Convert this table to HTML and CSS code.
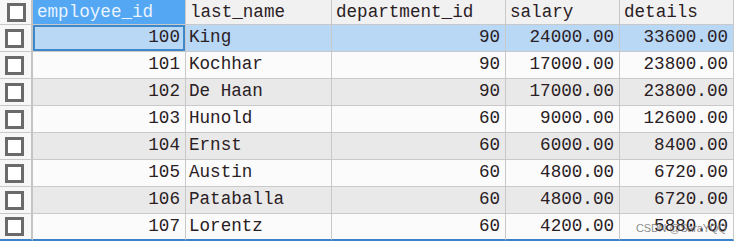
FILE: index.html
```html
<!DOCTYPE html>
<html>
<head>
<meta charset="utf-8">
<link rel="stylesheet" href="styles.css">
</head>
<body>
<div class="grid">
  <div class="row head">
    <div class="cell chk"><span class="box"></span></div>
    <div class="cell sorted">employee_id</div>
    <div class="cell">last_name</div>
    <div class="cell">department_id</div>
    <div class="cell">salary</div>
    <div class="cell">details</div>
  </div>
  <div class="row sel">
    <div class="cell chk"><span class="box"></span></div>
    <div class="cell num focus">100</div>
    <div class="cell">King</div>
    <div class="cell num">90</div>
    <div class="cell num">24000.00</div>
    <div class="cell num">33600.00</div>
  </div>
  <div class="row">
    <div class="cell chk"><span class="box"></span></div>
    <div class="cell num">101</div>
    <div class="cell">Kochhar</div>
    <div class="cell num">90</div>
    <div class="cell num">17000.00</div>
    <div class="cell num">23800.00</div>
  </div>
  <div class="row alt">
    <div class="cell chk"><span class="box"></span></div>
    <div class="cell num">102</div>
    <div class="cell">De Haan</div>
    <div class="cell num">90</div>
    <div class="cell num">17000.00</div>
    <div class="cell num">23800.00</div>
  </div>
  <div class="row">
    <div class="cell chk"><span class="box"></span></div>
    <div class="cell num">103</div>
    <div class="cell">Hunold</div>
    <div class="cell num">60</div>
    <div class="cell num">9000.00</div>
    <div class="cell num">12600.00</div>
  </div>
  <div class="row alt">
    <div class="cell chk"><span class="box"></span></div>
    <div class="cell num">104</div>
    <div class="cell">Ernst</div>
    <div class="cell num">60</div>
    <div class="cell num">6000.00</div>
    <div class="cell num">8400.00</div>
  </div>
  <div class="row">
    <div class="cell chk"><span class="box"></span></div>
    <div class="cell num">105</div>
    <div class="cell">Austin</div>
    <div class="cell num">60</div>
    <div class="cell num">4800.00</div>
    <div class="cell num">6720.00</div>
  </div>
  <div class="row alt">
    <div class="cell chk"><span class="box"></span></div>
    <div class="cell num">106</div>
    <div class="cell">Pataballa</div>
    <div class="cell num">60</div>
    <div class="cell num">4800.00</div>
    <div class="cell num">6720.00</div>
  </div>
  <div class="row last">
    <div class="cell chk"><span class="box"></span></div>
    <div class="cell num">107</div>
    <div class="cell">Lorentz</div>
    <div class="cell num">60</div>
    <div class="cell num">4200.00</div>
    <div class="cell num">5880.00</div>
  </div>
  <div class="watermark">CSDN @SaraYQQ</div>
</div>
</body>
</html>
```
FILE: styles.css
```css
html, body {
  margin: 0;
  padding: 0;
  background: #ffffff;
}
.grid {
  position: relative;
  width: 734px;
  height: 242px;
  overflow: hidden;
  font-family: "Liberation Mono", "DejaVu Sans Mono", monospace;
  font-size: 17.6px;
  color: #2a2024;
}
.row {
  display: grid;
  grid-template-columns: 33px 153px 146px 174px 114px 114px;
  height: 27px;
  background: #fbfbfb;
}
.row.alt { background: #e9e9e9; }
.row.sel { background: #b9d8f6; }
.row.head { height: 25px; background: #f1f1f1; }
.cell {
  box-sizing: border-box;
  border-right: 1px solid #c9c9c9;
  border-bottom: 1px solid #c9c9c9;
  padding: 0 4px 0 3px;
  display: flex;
  align-items: center;
  white-space: nowrap;
  overflow: hidden;
  line-height: 1;
}
.row.head .cell { padding-top: 1px; padding-left: 4px; }
.row.last .cell { border-bottom: 2px solid #3b82c9; }
.cell.num { justify-content: flex-end; padding-right: 5px; }
.cell.chk {
  justify-content: center;
  padding: 0;
  background: #f7f7f7;
  border-right: 2px solid #c4c4c4;
}
.row.last .cell.chk { border-bottom: 2px solid #3b82c9; }
.cell.sorted {
  background: #53a7f3;
  color: #e8f3ff;
}
.cell.focus {
  box-shadow: inset 0 0 0 2px #3e87c8;
}
.box {
  display: block;
  width: 13px;
  height: 13px;
  border: 3px solid #6a6a6a;
  background: #ffffff;
  margin-left: -2px;
}
.watermark {
  position: absolute;
  left: 636px;
  top: 221px;
  white-space: nowrap;
  font-family: "Liberation Sans", Arial, sans-serif;
  font-size: 11px;
  letter-spacing: -0.2px;
  line-height: 14px;
  color: rgba(110, 110, 110, 0.8);
}
```
